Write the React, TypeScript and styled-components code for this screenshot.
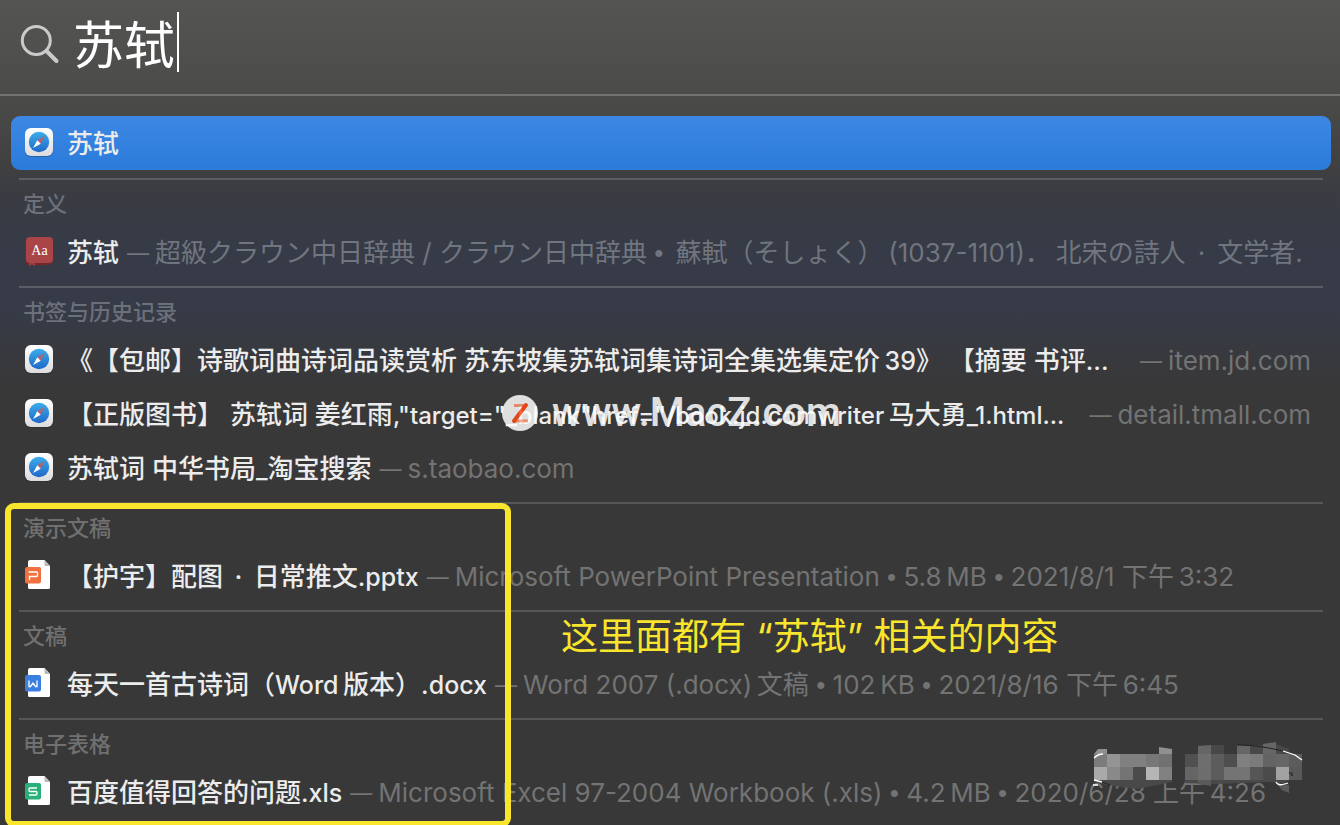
import React, { useState } from "react";
import styled, { createGlobalStyle } from "styled-components";

const GlobalStyle = createGlobalStyle`
  * { box-sizing: border-box; }
  body { margin: 0; background: #383838; }
`;

const sans = `Inter, "Noto Sans CJK SC", sans-serif`;

const Panel = styled.main`
  position: relative;
  min-height: 100vh;
  overflow: hidden;
  font-family: ${sans};
  text-spacing-trim: space-all;
  color: #ececec;
  background: linear-gradient(
    to bottom,
    #545553 0,
    #4b4b4a 96px,
    #414141 160px,
    #3b3c42 190px,
    #363b47 250px,
    #363b47 310px,
    #38393d 360px,
    #383838 400px
  );
`;

const SearchBar = styled.label`
  display: flex;
  align-items: center;
  height: 96px;
  padding: 0 20px 10px;
  border-bottom: 2px solid #727372;
`;

const SearchGlyph = styled.svg`
  width: 40px;
  height: 40px;
  margin: 4px 13px 0 0;
  flex: none;
`;

const SearchInput = styled.input`
  field-sizing: content;
  min-width: 0;
  height: 72px;
  padding: 0;
  border: 0;
  outline: 0;
  background: transparent;
  color: #fff;
  caret-color: transparent;
  font-family: ${sans};
  font-size: 51px;
`;

const Caret = styled.span`
  width: 2px;
  height: 60px;
  margin-left: 2px;
  background: #fff;
`;

const Results = styled.div`
  padding-top: 20px;
`;

const Row = styled.button<{ $selected?: boolean }>`
  display: flex;
  align-items: center;
  width: calc(100% - 20px);
  height: 54px;
  margin: 0 9px 0 11px;
  padding: 0 20px 2px 12px;
  border: 0;
  border-radius: 9px;
  background: ${(p) => (p.$selected ? "linear-gradient(#3d87e4, #2a7bda)" : "transparent")};
  font-family: ${sans};
  font-size: 26px;
  line-height: 36px;
  color: inherit;
  text-align: left;
  white-space: pre;
`;

const IconSlot = styled.span`
  display: flex;
  flex: none;
  width: 32px;
  height: 32px;
  margin-right: 12px;
`;

const Title = styled.span`
  flex: none;
  padding-top: 4px;
  font-weight: 500;
`;

const Latin = styled.span<{ $dense?: boolean }>`
  font-size: ${(p) => (p.$dense ? "24px" : "25px")};
`;

const Dot = styled.span`
  font-family: "Liberation Sans", sans-serif;
`;

const Detail = styled.span<{ $end?: boolean; $tint?: boolean }>`
  display: flex;
  flex: none;
  gap: 6px;
  margin-left: ${(p) => (p.$end ? "auto" : "0")};
  padding: 4px 0 0 8px;
  color: ${(p) => (p.$tint ? "#70757f" : "#737373")};
`;

const Dash = styled.span`
  font-size: 22px;
`;

const Section = styled.section<{ $first?: boolean }>`
  padding-top: ${(p) => (p.$first ? "8px" : "7px")};
`;

const SectionTitle = styled.h2<{ $tint?: boolean }>`
  height: 47px;
  margin: 0 17px 0 19px;
  padding: 8px 4px 0;
  border-top: 2px solid ${(p) => (p.$tint ? "#5b5e66" : "#565656")};
  color: ${(p) => (p.$tint ? "#6c707b" : "#707070")};
  font-size: 22px;
  font-weight: 500;
  line-height: 32px;
`;

const Documents = styled.div`
  position: relative;
`;

const HighlightFrame = styled.div`
  position: absolute;
  top: 8px;
  bottom: -8px;
  left: 5px;
  width: 506px;
  border: 6px solid #f9e52c;
  border-radius: 9px;
  pointer-events: none;
`;

const Note = styled.p`
  position: absolute;
  top: 118px;
  left: 561px;
  margin: 0;
  color: #f9e52c;
  font-size: 37px;
  line-height: 48px;
  white-space: nowrap;
`;

const Watermark = styled.div`
  position: absolute;
  top: 393px;
  left: 502px;
  display: flex;
  align-items: center;
  gap: 14px;
  color: #fff;
  opacity: 0.84;
  font-family: Roboto, sans-serif;
  font-size: 40px;
  font-weight: 500;
  line-height: 40px;
  pointer-events: none;
`;

const Mosaic = styled.svg`
  position: absolute;
  right: 32px;
  bottom: 28px;
  width: 220px;
  height: 56px;
`;

function SafariIcon() {
  return (
    <svg width="32" height="32" viewBox="0 0 32 32" aria-hidden="true">
      <defs>
        <linearGradient id="tile" x1="0" y1="0" x2="0" y2="1">
          <stop offset="0" stopColor="#fff" />
          <stop offset="1" stopColor="#dcdcdf" />
        </linearGradient>
        <linearGradient id="dial" x1="0" y1="0" x2="0" y2="1">
          <stop offset="0" stopColor="#3badeb" />
          <stop offset="1" stopColor="#2068c8" />
        </linearGradient>
      </defs>
      <rect x="2" y="3" width="28" height="28" rx="6" fill="#222" opacity=".3" />
      <rect x="2" y="2" width="28" height="28" rx="6" fill="url(#tile)" />
      <circle cx="16" cy="16" r="10.2" fill="url(#dial)" />
      <path d="M22 10 14.300 14.300 17.700 17.700Z" fill="#b5616e" />
      <path d="M10 22 14.300 14.300 17.700 17.700Z" fill="#fff" />
    </svg>
  );
}

function DictionaryIcon() {
  return (
    <svg width="32" height="32" viewBox="0 0 32 32" aria-hidden="true">
      <rect x="2" y="3" width="28" height="27" rx="5" fill="#74282c" />
      <rect x="3" y="2" width="27" height="26" rx="4" fill="#a94447" />
      <path d="M6 28v3l3-1.500 3 1.500v-3Z" fill="#a33a3d" />
      <text x="16.500" y="20" textAnchor="middle" fontFamily="Liberation Serif, serif" fontSize="14" fill="#fff">
        Aa
      </text>
    </svg>
  );
}

const marks = {
  p: { color: "#f0703f", path: "M5.500 13h8a1 1 0 0 1 1 1v2.500a1 1 0 0 1-1 1h-7V21" },
  w: { color: "#3a7fe0", path: "M6 13.500v6h1.500L10 16l2.500 3.500H14v-6" },
  s: { color: "#27b07a", path: "M14 13H7a1 1 0 0 0-1 1v1.500a1 1 0 0 0 1 1h6a1 1 0 0 1 1 1V19a1 1 0 0 1-1 1H6" },
};

function FileIcon({ kind }: { kind: keyof typeof marks }) {
  return (
    <svg width="32" height="32" viewBox="0 0 32 32" aria-hidden="true">
      <path d="M7 1h14.500L27 7v21.500a1.500 1.500 0 0 1-1.500 1.500h-19A1.500 1.500 0 0 1 5 28.500V3a2 2 0 0 1 2-2Z" fill="#fff" />
      <path d="M21.500 1 27 7h-4a1.500 1.500 0 0 1-1.500-1.500Z" fill="#b9b9b9" />
      <rect x="2" y="8" width="16" height="16.500" rx="2" fill={marks[kind].color} />
      <path d={marks[kind].path} fill="none" stroke="#fff" strokeWidth="1.300" />
    </svg>
  );
}

const blocks: [number, number, string][] = [
  [0, 0, "#7c7c7c"], [1, 0, "#949494"], [2, 0, "#808080"], [3, 0, "#808080"], [4, 0, "#777777"], [5, 0, "#717171"],
  [0, 1, "#a9a9a9"], [1, 1, "#898989"], [2, 1, "#747474"], [3, 1, "#4b4b4b"], [4, 1, "#b5b5b5"], [5, 1, "#818181"],
  [7, 0, "#505050"], [8, 0, "#6e6e6e"], [9, 0, "#5c5c5c"], [10, 0, "#4e4e4e"], [11, 0, "#808080"], [12, 0, "#7b7b7b"],
  [13, 0, "#636363"], [14, 0, "#666666"], [15, 0, "#5c5c5c"],
  [7, 1, "#656565"], [8, 1, "#6d6d6d"], [9, 1, "#5c5c5c"], [10, 1, "#747474"], [11, 1, "#747474"], [12, 1, "#565656"],
  [13, 1, "#4b4b4b"], [14, 1, "#a2a2a2"], [15, 1, "#595959"],
];

function MosaicPatch() {
  return (
    <Mosaic viewBox="0 0 220 56" aria-hidden="true">
      <path d="M6 13 10 8h9v5ZM71 6l13 2v5H71Z" fill="#909090" />
      <path d="M110 5l13-1v9h-13ZM149 4l13 1v8h-13ZM175 3l13-2v12h-13Z" fill="#666" />
      <path d="M123 4h13v9h-13ZM162 5l13-1v9h-13ZM188 3l13 5v5h-13Z" fill="#484848" />
      <path d="M6 39h78v2l-35 7-30-4-13-3ZM97 39h104l-6 3-13-1-56 2-29-1Z" fill="#494949" />
      <path d="M110 39h13v6l-13-2ZM188 42l13 2v8l-7-3Z" fill="#5a5a5a" />
      {blocks.map(([c, r, fill]) => (
        <rect key={`${c}-${r}`} x={6 + c * 13} y={13 + r * 13} width="13" height="13" fill={fill} />
      ))}
      <path d="M6 17c3-3 5-4 9-4M195 10l12 4 7 5M188 41c2 4 6 3 12 1M6 39l8 2M5 44h5" fill="none" stroke="#fff" strokeWidth="1.300" />
      <path d="M149 4c18 0 33 3 46 6M14 41l8 3M201 31l3 4v-4" fill="none" stroke="#222" />
    </Mosaic>
  );
}

/* Latin runs sit one step smaller than the Han characters round them; dense is for titles that hold a long address. */
function Mixed({ children, dense }: { children: string; dense?: boolean }) {
  return (
    <Title>
      {children.split(/([\x21-\x7e]+)/).map((run, i) => (i % 2 ? <Latin key={i} $dense={dense}>{run}</Latin> : run))}
    </Title>
  );
}

function Meta({ children, ...rest }: { children: string; $end?: boolean; $tint?: boolean; lang?: string }) {
  return (
    <Detail {...rest}>
      <Dash>—</Dash>
      <span>
        {children.split(/(•)/).map((run, i) => (i % 2 ? <Dot key={i}>{run}</Dot> : run))}
      </span>
    </Detail>
  );
}

export default function App() {
  const [query, setQuery] = useState("苏轼");
  return (
    <>
      <GlobalStyle />
      <Panel>
        <SearchBar>
          <SearchGlyph viewBox="0 0 40 40" fill="none" stroke="#c9cac9" aria-hidden="true">
            <circle cx="16.300" cy="16.500" r="14" strokeWidth="3" />
            <path d="m26.500 27 10 10" strokeWidth="4" strokeLinecap="round" />
          </SearchGlyph>
          <SearchInput aria-label="搜索" value={query} onChange={(e) => setQuery(e.target.value)} />
          <Caret />
        </SearchBar>

        <Results>
          <Row $selected>
            <IconSlot><SafariIcon /></IconSlot>
            <Mixed>苏轼</Mixed>
          </Row>

          <Section $first>
            <SectionTitle $tint>定义</SectionTitle>
            <Row>
              <IconSlot><DictionaryIcon /></IconSlot>
              <Mixed>苏轼</Mixed>
              <Meta $tint lang="ja">{"超級クラウン中日辞典 / クラウン日中辞典 •\u2009 蘇軾（そしょく）\u2009(1037-1101)．\u2009北宋の詩人\u2009 · \u2009文学者."}</Meta>
            </Row>
          </Section>

          <Section>
            <SectionTitle $tint>书签与历史记录</SectionTitle>
            <Row>
              <IconSlot><SafariIcon /></IconSlot>
              <Mixed>{"《【包邮】诗歌词曲诗词品读赏析 苏东坡集苏轼词集诗词全集选集定价\u200939》 【摘要 书评..."}</Mixed>
              <Meta $end>item.jd.com</Meta>
            </Row>
            <Row>
              <IconSlot><SafariIcon /></IconSlot>
              <Mixed dense>{"【正版图书】 苏轼词 姜红雨,\"target=\"_blank\"href=\"/book.jd.comwriter\u2009马大勇_1.html..."}</Mixed>
              <Meta $end>detail.tmall.com</Meta>
            </Row>
            <Row>
              <IconSlot><SafariIcon /></IconSlot>
              <Mixed>苏轼词 中华书局_淘宝搜索</Mixed>
              <Meta>s.taobao.com</Meta>
            </Row>
          </Section>

          <Documents>
            <Section>
              <SectionTitle>演示文稿</SectionTitle>
              <Row>
                <IconSlot><FileIcon kind="p" /></IconSlot>
                <Mixed>{"【护宇】配图\u2009 · \u2009日常推文.pptx"}</Mixed>
                <Meta>{"Microsoft PowerPoint Presentation • 5.8\u2009MB • 2021/8/1 下午\u20093:32"}</Meta>
              </Row>
            </Section>
            <Section>
              <SectionTitle>文稿</SectionTitle>
              <Row>
                <IconSlot><FileIcon kind="w" /></IconSlot>
                <Mixed>{"每天一首古诗词（Word\u2009版本）.docx"}</Mixed>
                <Meta>{"Word 2007 (.docx)\u2009文稿 • 102\u2009KB • 2021/8/16 下午\u20096:45"}</Meta>
              </Row>
            </Section>
            <Section>
              <SectionTitle>电子表格</SectionTitle>
              <Row>
                <IconSlot><FileIcon kind="s" /></IconSlot>
                <Mixed>百度值得回答的问题.xls</Mixed>
                <Meta>{"Microsoft Excel 97-2004 Workbook (.xls) • 4.2\u2009MB • 2020/6/28 上午\u20094:26"}</Meta>
              </Row>
            </Section>
            <HighlightFrame />
            <Note>这里面都有 “苏轼” 相关的内容</Note>
          </Documents>
        </Results>

        <Watermark>
          <svg width="36" height="36" viewBox="0 0 36 36" aria-hidden="true">
            <circle cx="18" cy="18" r="18" fill="#fff" />
            <path d="M12 10.500h11M13 26h13" stroke="#ff9a78" strokeWidth="3" />
            <path d="M24 10 12 26" stroke="#ff4a12" strokeWidth="4" strokeLinecap="round" />
          </svg>
          www.MacZ.com
        </Watermark>
        <MosaicPatch />
      </Panel>
    </>
  );
}
